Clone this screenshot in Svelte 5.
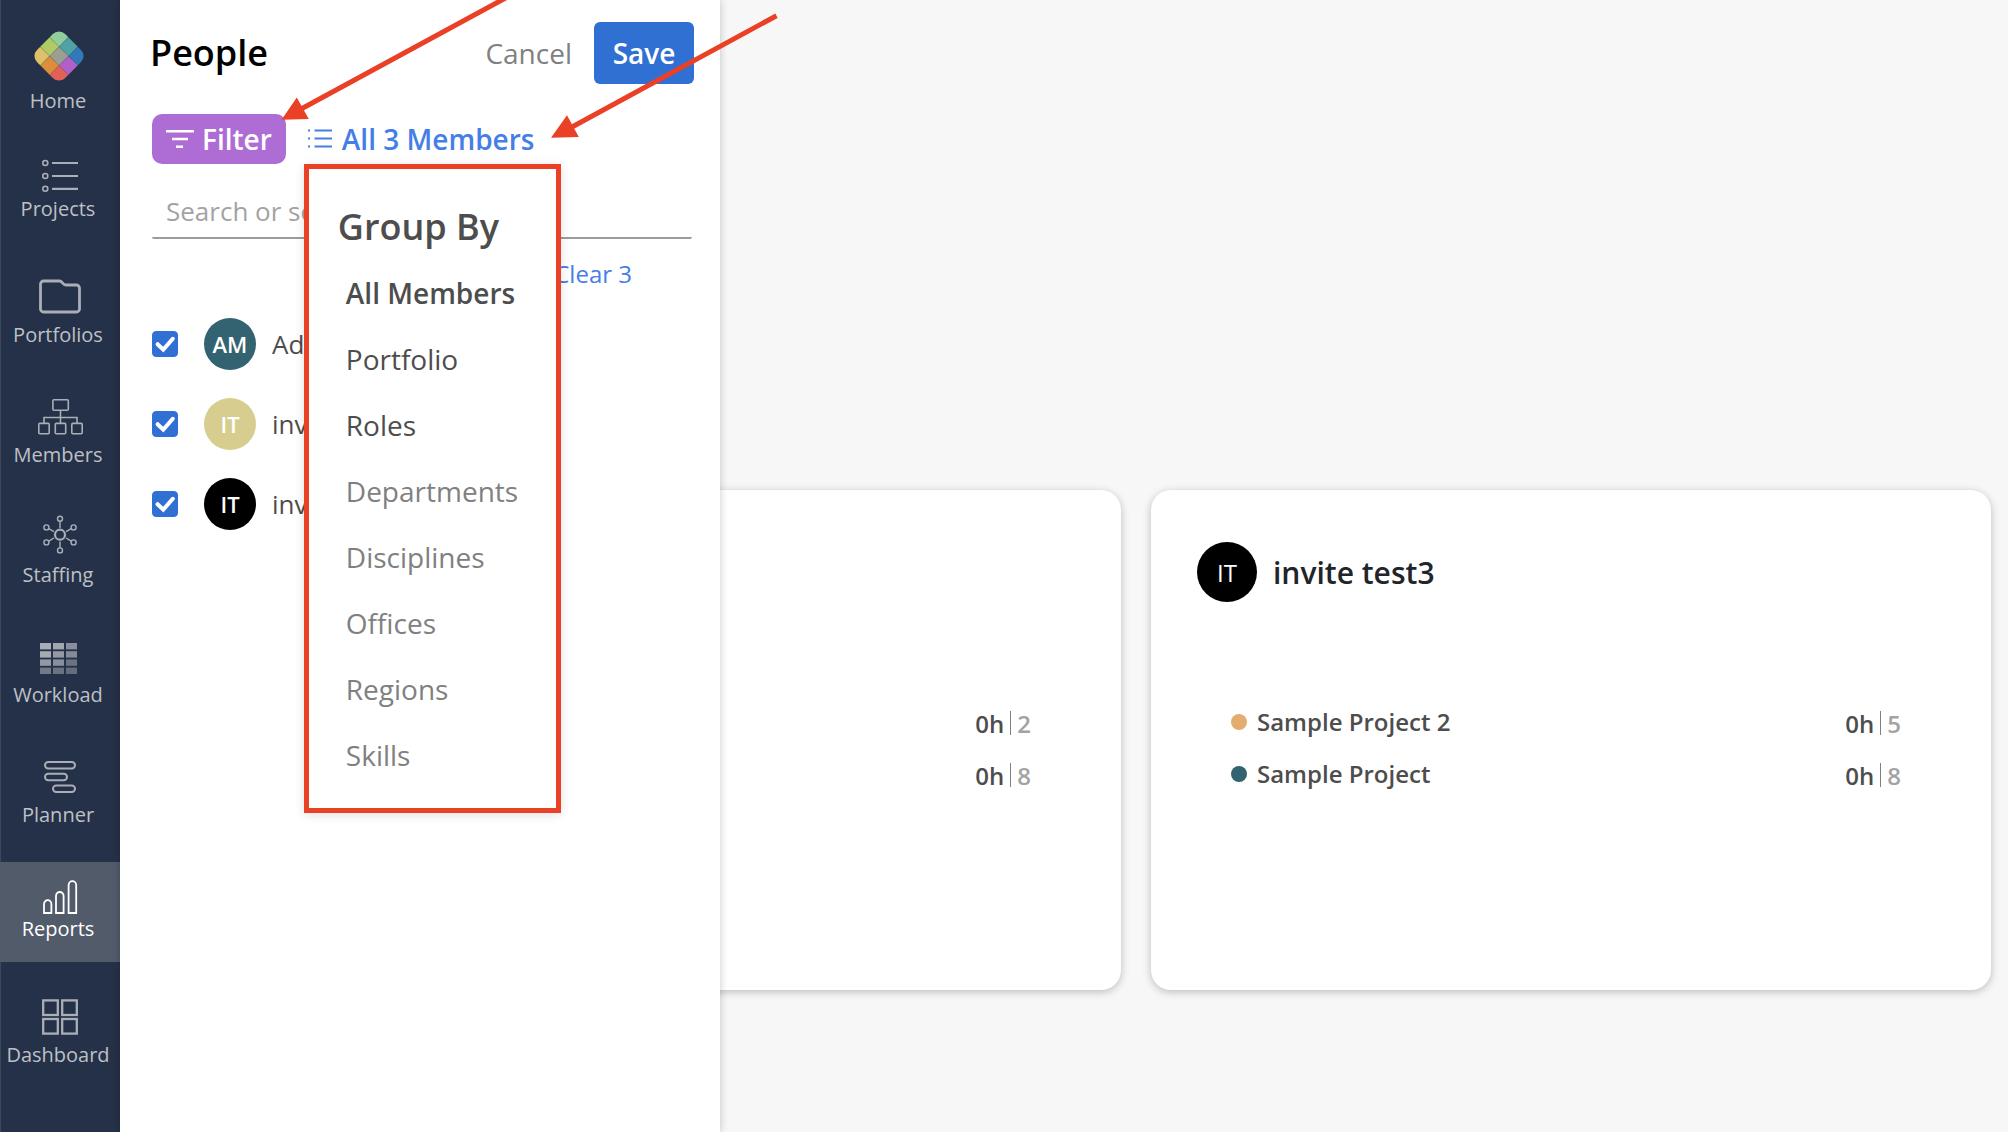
<script>
  const logo = [
    ['#92cd9c', '#4fa3a5', '#3379b8'],
    ['#b0cb63', '#9b9f92', '#b160ca'],
    ['#dec168', '#db8e3b', '#e06156']
  ];

  const heat = [
    [0.9, 0.85, 0.68],
    [0.88, 0.75, 0.65],
    [0.75, 0.68, 0.48],
    [0.52, 0.48, 0.44]
  ];

  const nav = [
    { id: 'home', label: 'Home' },
    { id: 'projects', label: 'Projects' },
    { id: 'portfolios', label: 'Portfolios' },
    { id: 'members', label: 'Members' },
    { id: 'staffing', label: 'Staffing' },
    { id: 'workload', label: 'Workload' },
    { id: 'planner', label: 'Planner' },
    { id: 'reports', label: 'Reports' },
    { id: 'dashboard', label: 'Dashboard' }
  ];

  let people = $state([
    { initials: 'AM', name: 'Admin', tone: 'teal', checked: true },
    { initials: 'IT', name: 'invite test2', tone: 'sand', checked: true },
    { initials: 'IT', name: 'invite test3', tone: 'black', checked: true }
  ]);

  const groups = [
    { label: 'All Members', kind: 'current' },
    { label: 'Portfolio', kind: 'ready' },
    { label: 'Roles', kind: 'ready' },
    { label: 'Departments', kind: 'muted' },
    { label: 'Disciplines', kind: 'muted' },
    { label: 'Offices', kind: 'muted' },
    { label: 'Regions', kind: 'muted' },
    { label: 'Skills', kind: 'muted' }
  ];

  const cards = [
    { rows: [{ hours: '0h', count: 2 }, { hours: '0h', count: 8 }] },
    {
      initials: 'IT',
      name: 'invite test3',
      rows: [
        { project: 'Sample Project 2', tone: 'orange', hours: '0h', count: 5 },
        { project: 'Sample Project', tone: 'teal', hours: '0h', count: 8 }
      ]
    }
  ];
</script>

<div class="page">
  <nav class="sidebar" aria-label="Main">
    {#each nav as item}
      <a class="nav-item {item.id}" href="#{item.id}" aria-current={item.id === 'reports' ? 'page' : undefined}>
        <svg class="nav-icon" viewBox="0 0 120 52" aria-hidden="true">
          {#if item.id === 'home'}
            <clipPath id="logo-clip"><rect x="39" y="2" width="40" height="40" rx="9" /></clipPath>
            <g transform="rotate(45 59 22)" clip-path="url(#logo-clip)" stroke="none">
              {#each logo as row, r}
                {#each row as color, c}
                  <rect x={39 + c * 13.4} y={2 + r * 13.4} width="13.3" height="13.3" fill={color} />
                {/each}
              {/each}
            </g>
          {:else if item.id === 'projects'}
            <g stroke-width="1.6">
              <circle cx="45.3" cy="21" r="2.5" /><circle cx="45.3" cy="34" r="2.5" /><circle cx="45.3" cy="46.8" r="2.5" />
            </g>
            <path d="M52 21h26M52 34h26M52 46.8h26" stroke-width="2.2" />
          {:else if item.id === 'portfolios'}
            <path stroke-width="2.8" d="M43.5 13H59.5C62.5 13 62.5 17 66 17H76.5a3 3 0 0 1 3 3V41a3 3 0 0 1-3 3H43.5a3 3 0 0 1-3-3V16a3 3 0 0 1 3-3Z" />
          {:else if item.id === 'members'}
            <g stroke-width="1.6">
              <rect x="52.9" y="11.8" width="15.4" height="10.4" rx="1" />
              <rect x="38.8" y="35.4" width="10.4" height="10.4" rx="1" />
              <rect x="55.3" y="35.4" width="10.4" height="10.4" rx="1" />
              <rect x="71.8" y="35.4" width="10.4" height="10.4" rx="1" />
              <path d="M60.5 22.2V35.4M44 35.4V29.5H77V35.4" />
            </g>
          {:else if item.id === 'staffing'}
            <circle cx="60" cy="26.7" r="5" stroke-width="2.2" />
            <g stroke-width="1.4">
              <circle cx="60" cy="10.8" r="2.5" /><circle cx="60" cy="42.4" r="2.5" />
              <circle cx="46.4" cy="19.4" r="2.5" /><circle cx="46.4" cy="34.4" r="2.5" />
              <circle cx="73.6" cy="19.4" r="2.5" /><circle cx="73.6" cy="34.4" r="2.5" />
              <path d="M60 13.5V20M60 33.4V40M48.7 20.6L54 23.6M48.7 33.2L54 30M71.3 20.6L66 23.6M71.3 33.2L66 30" />
            </g>
          {:else if item.id === 'workload'}
            <g class="heat">
              {#each heat as row, r}
                {#each row as alpha, c}
                  <rect x={40 + c * 13} y={15 + r * 8.2} width="11" height="6.4" fill-opacity={alpha} />
                {/each}
              {/each}
            </g>
          {:else if item.id === 'planner'}
            <g stroke-width="2">
              <rect x="45" y="14" width="30" height="6.4" rx="3.2" />
              <rect x="45" y="25.8" width="22" height="6.4" rx="3.2" />
              <rect x="53" y="37.6" width="22" height="6.4" rx="3.2" />
            </g>
          {:else if item.id === 'reports'}
            <g stroke-width="1.8">
              <path d="M44 51V42.2a3.7 4 0 0 1 7.4 0V51Z" />
              <path d="M56 51V34a3.8 4 0 0 1 7.6 0V51Z" />
              <path d="M68.6 51V23.2a3.8 4 0 0 1 7.6 0V51Z" />
            </g>
          {:else}
            <g stroke-width="2.3">
              <rect x="43.2" y="12.4" width="14.6" height="14.6" /><rect x="62.2" y="12.4" width="14.6" height="14.6" />
              <rect x="43.2" y="31" width="14.6" height="14.6" /><rect x="62.2" y="31" width="14.6" height="14.6" />
            </g>
          {/if}
        </svg>
        <span class="nav-label">{item.label}</span>
      </a>
    {/each}
  </nav>

  <main class="board">
    {#each cards as card}
      <article class="card">
        <header class="card-head">
          {#if card.name}
            <span class="avatar large black">{card.initials}</span>
            <h2>{card.name}</h2>
          {/if}
        </header>
        <ul class="projects-list">
          {#each card.rows as row}
            <li>
              {#if row.project}
                <span class="dot {row.tone}"></span>
                <span class="project">{row.project}</span>
              {/if}
              <span class="figures"><span>{row.hours}</span><span class="rule"></span><span class="count">{row.count}</span></span>
            </li>
          {/each}
        </ul>
      </article>
    {/each}
  </main>

  <section class="drawer" aria-label="People">
    <header class="drawer-head">
      <h1>People</h1>
      <button type="button" class="cancel">Cancel</button>
      <button type="button" class="save">Save</button>
    </header>

    <div class="tools">
      <button type="button" class="filter">
        <svg width="28" height="20" viewBox="0 0 28 20" aria-hidden="true"><path d="M0 2.3h28M6 10h16M10 17.7h7" /></svg>
        Filter
      </button>
      <div class="group-anchor">
        <button type="button" class="group" aria-haspopup="menu" aria-expanded="true">
          <svg width="24" height="20" viewBox="0 0 24 20" aria-hidden="true">
            <path d="M6.5 1.5h17.5M6.5 9.5h17.5M6.5 17.5h17.5M0 1.5h2M0 9.5h2M0 17.5h2" />
          </svg>
          All 3 Members
        </button>
        <div class="menu">
          <h2>Group By</h2>
          <ul>
            {#each groups as group}
              <li><button type="button" class={group.kind}>{group.label}</button></li>
            {/each}
          </ul>
        </div>
      </div>
    </div>

    <input class="search" type="text" placeholder="Search or select" aria-label="Search or select" />
    <button type="button" class="clear">Clear 3</button>

    <ul class="people">
      {#each people as person}
        <li>
          <label>
            <span class="tick">
              <input type="checkbox" bind:checked={person.checked} />
              {#if person.checked}
                <svg viewBox="0 0 26 26" aria-hidden="true"><path d="M5.6 13.2L11.3 18.6L20.8 7.8" /></svg>
              {/if}
            </span>
            <span class="avatar {person.tone}">{person.initials}</span>
            <span>{person.name}</span>
          </label>
        </li>
      {/each}
    </ul>
  </section>

  <svg class="arrows" width="800" height="160" viewBox="0 0 800 160" aria-hidden="true">
    <path class="shaft" d="M302 108.5L512 -5.5M572 127L776.5 15.7" />
    <path class="head" d="M281.5 119.7L296.8 97.5L308.8 119ZM551 137.8L567 115.3L578.8 137Z" />
  </svg>
</div>

<style>
  :global(body) {
    margin: 0;
  }

  .page {
    position: relative;
    display: grid;
    grid-template-columns: 120px 600px 1fr;
    min-height: 100vh;
    overflow: hidden;
    background: #f7f7f7;
    color: #4d4d4d;
    font-family: 'Open Sans', 'Noto Sans', sans-serif;
    font-size: 24px;
  }

  h1,
  h2,
  ul {
    margin: 0;
    padding: 0;
    list-style: none;
  }

  button,
  input {
    margin: 0;
    padding: 0;
    border: 0;
    background: none;
    color: inherit;
    font: inherit;
  }

  .sidebar {
    grid-area: 1 / 1;
    display: flex;
    flex-direction: column;
    box-sizing: border-box;
    padding-top: 34px;
    background: #253148;
    box-shadow: inset 1px 0 #3c4759;
  }

  .nav-item {
    display: flex;
    flex-direction: column;
    padding-bottom: 18px;
    color: #bdc0c6;
    font-size: 20px;
    line-height: 30px;
    text-align: center;
    text-decoration: none;
  }

  .nav-item + .nav-item {
    margin-top: 20px;
  }

  .nav-item.projects {
    margin-top: 8px;
  }

  .nav-item.portfolios,
  .nav-item.dashboard {
    margin-top: 26px;
  }

  .nav-item.reports {
    margin-top: 14px;
    background: #525b6a;
    color: #fff;
  }

  .nav-icon {
    width: 120px;
    height: 52px;
    overflow: visible;
    fill: none;
    stroke: #a9aeb7;
  }

  .reports .nav-icon {
    stroke: #fff;
  }

  .heat {
    fill: #b8bbc2;
    stroke: none;
  }

  .nav-label {
    padding-right: 4px;
  }

  .board {
    grid-area: 1 / 2 / 2 / 4;
    display: grid;
    grid-template-columns: 1fr 1fr;
    align-content: start;
    gap: 30px;
    padding: 490px 17px 40px 161px;
  }

  .card {
    box-sizing: border-box;
    min-height: 500px;
    padding: 52px 90px 52px 46px;
    border-radius: 20px;
    background: #fff;
    box-shadow: 0 2px 8px rgba(0, 0, 0, 0.24);
  }

  .card-head {
    display: flex;
    align-items: center;
    gap: 16px;
    min-height: 60px;
    margin-bottom: 94px;
    color: #212529;
  }

  .card-head h2 {
    padding-top: 2px;
    font-size: 30px;
    font-weight: 600;
    line-height: 40px;
  }

  .projects-list {
    padding-left: 34px;
    font-weight: 600;
  }

  .projects-list li {
    display: flex;
    align-items: center;
    gap: 10px;
    height: 52px;
  }

  .dot {
    width: 16px;
    height: 16px;
    border-radius: 50%;
  }

  .project {
    padding-bottom: 2px;
  }

  .figures {
    display: flex;
    align-items: center;
    gap: 6px;
    margin-left: auto;
    padding-top: 2px;
  }

  .rule {
    width: 1px;
    height: 24px;
    background: #808080;
  }

  .count {
    color: #a3a3a3;
  }

  .avatar {
    display: grid;
    place-items: center;
    width: 52px;
    height: 52px;
    border-radius: 50%;
    color: #fff;
    font-size: 22px;
    font-weight: 600;
  }

  .avatar.large {
    width: 60px;
    height: 60px;
    font-size: 24px;
    font-weight: 500;
  }

  .teal {
    background: #336270;
  }

  .sand {
    background: #d7cd8f;
  }

  .black {
    background: #000;
  }

  .orange {
    background: #e3ad6f;
  }

  .drawer {
    grid-area: 1 / 2;
    z-index: 1;
    display: flex;
    flex-direction: column;
    box-sizing: border-box;
    padding: 22px 26px 0 32px;
    background: #fff;
    box-shadow: 0 0 8px rgba(0, 0, 0, 0.22);
  }

  .drawer-head {
    display: flex;
    align-items: center;
    margin-bottom: 30px;
    font-size: 28px;
  }

  .drawer-head h1 {
    margin: 0 auto 0 -2px;
    padding-bottom: 2px;
    color: #000;
    font-size: 36px;
    font-weight: 600;
  }

  .cancel {
    margin-right: 22px;
    color: #808080;
  }

  .save {
    width: 100px;
    height: 62px;
    border-radius: 6px;
    background: #3070d3;
    color: #fff;
    font-weight: 600;
  }

  .tools {
    display: flex;
    gap: 22px;
    font-size: 28px;
    font-weight: 600;
  }

  .filter,
  .group {
    display: flex;
    align-items: center;
    height: 50px;
    fill: none;
    font-size: 28px;
    font-weight: 600;
  }

  .filter {
    gap: 8px;
    padding: 0 14px;
    border-radius: 10px;
    background: #ae6dd4;
    color: #fff;
  }

  .filter path {
    stroke: #fff;
    stroke-width: 2.6;
  }

  .group {
    gap: 10px;
    color: #457ee6;
  }

  .group path {
    stroke: #457ee6;
    stroke-width: 2;
  }

  .group-anchor {
    position: relative;
  }

  .menu {
    position: absolute;
    top: 50px;
    left: -4px;
    z-index: 2;
    box-sizing: border-box;
    width: 257px;
    padding: 32px 0 20px 29px;
    border: 5px solid #ea4025;
    background: #fff;
    box-shadow: 0 2px 10px rgba(0, 0, 0, 0.12);
  }

  .menu h2 {
    margin-bottom: 7px;
    color: #4d4d4d;
    font-size: 36px;
    font-weight: 600;
    line-height: 52px;
  }

  .menu ul {
    padding-left: 8px;
  }

  .menu button {
    display: block;
    font-size: 28px;
    font-weight: 400;
    line-height: 66px;
  }

  .menu .current {
    font-weight: 600;
  }

  .menu .muted {
    color: #808080;
  }

  .search {
    box-sizing: border-box;
    width: 540px;
    height: 55px;
    margin-top: 20px;
    padding: 0 14px;
    border-bottom: 2px solid #9c9c9c;
    border-radius: 2px;
    font-size: 26px;
  }

  .search::placeholder {
    color: #a3a3a3;
    opacity: 1;
  }

  .clear {
    align-self: flex-end;
    margin: 18px 62px 14px 0;
    color: #457ee6;
    font-size: 24px;
    line-height: 33px;
  }

  .people label {
    display: flex;
    align-items: center;
    height: 80px;
    font-size: 26px;
  }

  .people .avatar {
    margin: 0 16px 0 26px;
  }

  .tick {
    display: grid;
  }

  .tick input {
    grid-area: 1 / 1;
    box-sizing: border-box;
    width: 26px;
    height: 26px;
    border: 1px solid #a3a3a3;
    border-radius: 4px;
    appearance: none;
  }

  .tick input:checked {
    border-color: #3070d3;
    background: #3070d3;
  }

  .tick svg {
    grid-area: 1 / 1;
    width: 26px;
    height: 26px;
    fill: none;
    stroke: #fff;
    stroke-width: 4;
    stroke-linecap: round;
    pointer-events: none;
  }

  .arrows {
    position: absolute;
    top: 0;
    left: 0;
    z-index: 3;
    pointer-events: none;
  }

  .shaft {
    fill: none;
    stroke: #ea4025;
    stroke-width: 5;
  }

  .head {
    fill: #ea4025;
  }
</style>
